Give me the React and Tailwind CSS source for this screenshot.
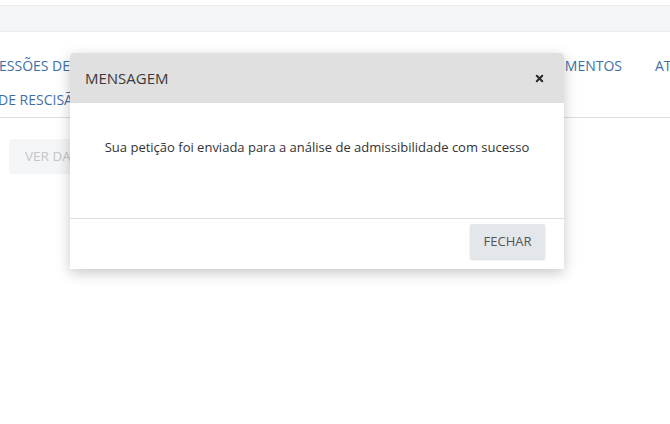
import { X } from 'lucide-react';

export default function App() {
  return (
    <div
      className="relative w-[670px] h-[424px] overflow-hidden bg-white"
      style={{ fontFamily: '"Open Sans", "Liberation Sans", sans-serif' }}
    >
      {/* Top bar */}
      <div className="h-[5px] bg-white" />
      <div className="h-[27px] bg-[#f4f5f8] border-t border-[#ececef] border-b border-[#e6e7ea]" />

      {/* Tabs */}
      <div className="mt-[16px] border-b border-[#dcdcdc] text-[14px] text-[#3f6fa5] whitespace-nowrap overflow-hidden">
        <div className="flex h-[34px] items-center">
          <div className="w-[100px] shrink-0 -ml-[1px]">ESSÕES DE</div>
          <div className="w-[523px] shrink-0 text-right">DOCUMENTOS</div>
          <div className="ml-[33px] shrink-0">ATOS</div>
        </div>
        <div className="flex h-[35px] items-center">
          <div className="-ml-[2px] shrink-0">DE RESCISÃO</div>
        </div>
      </div>

      {/* Content */}
      <div className="px-[9px] pt-[21px]">
        <button className="h-[35px] px-[16px] rounded-[3px] bg-[#f4f5f6] text-[13.5px] text-[#c4c6c8]">
          VER DADOS
        </button>
      </div>

      {/* Modal */}
      <div className="absolute left-[70px] top-[53px] w-[494px] bg-white rounded-t-[4px] shadow-[0_4px_14px_rgba(0,0,0,0.22)]">
        <div className="h-[50px] flex items-center justify-between pl-[15px] pr-[19px] bg-[#e0e0e0] rounded-t-[4px]">
          <span className="text-[15px] text-[#3a3a3a]">MENSAGEM</span>
          <X size={11} strokeWidth={4.5} className="text-[#2a2a2a]" />
        </div>
        <div className="h-[115px] pt-[35px] text-center text-[13px] text-[#333]">
          Sua petição foi enviada para a análise de admissibilidade com sucesso
        </div>
        <div className="h-[51px] border-t border-[#dedede] flex items-start justify-end pt-[5px] pr-[19px]">
          <button className="w-[75px] h-[35px] rounded-[2px] bg-[#e3e6ea] text-[13px] text-[#555] shadow-[0_1px_2px_rgba(0,0,0,0.15)]">
            FECHAR
          </button>
        </div>
      </div>
    </div>
  );
}
